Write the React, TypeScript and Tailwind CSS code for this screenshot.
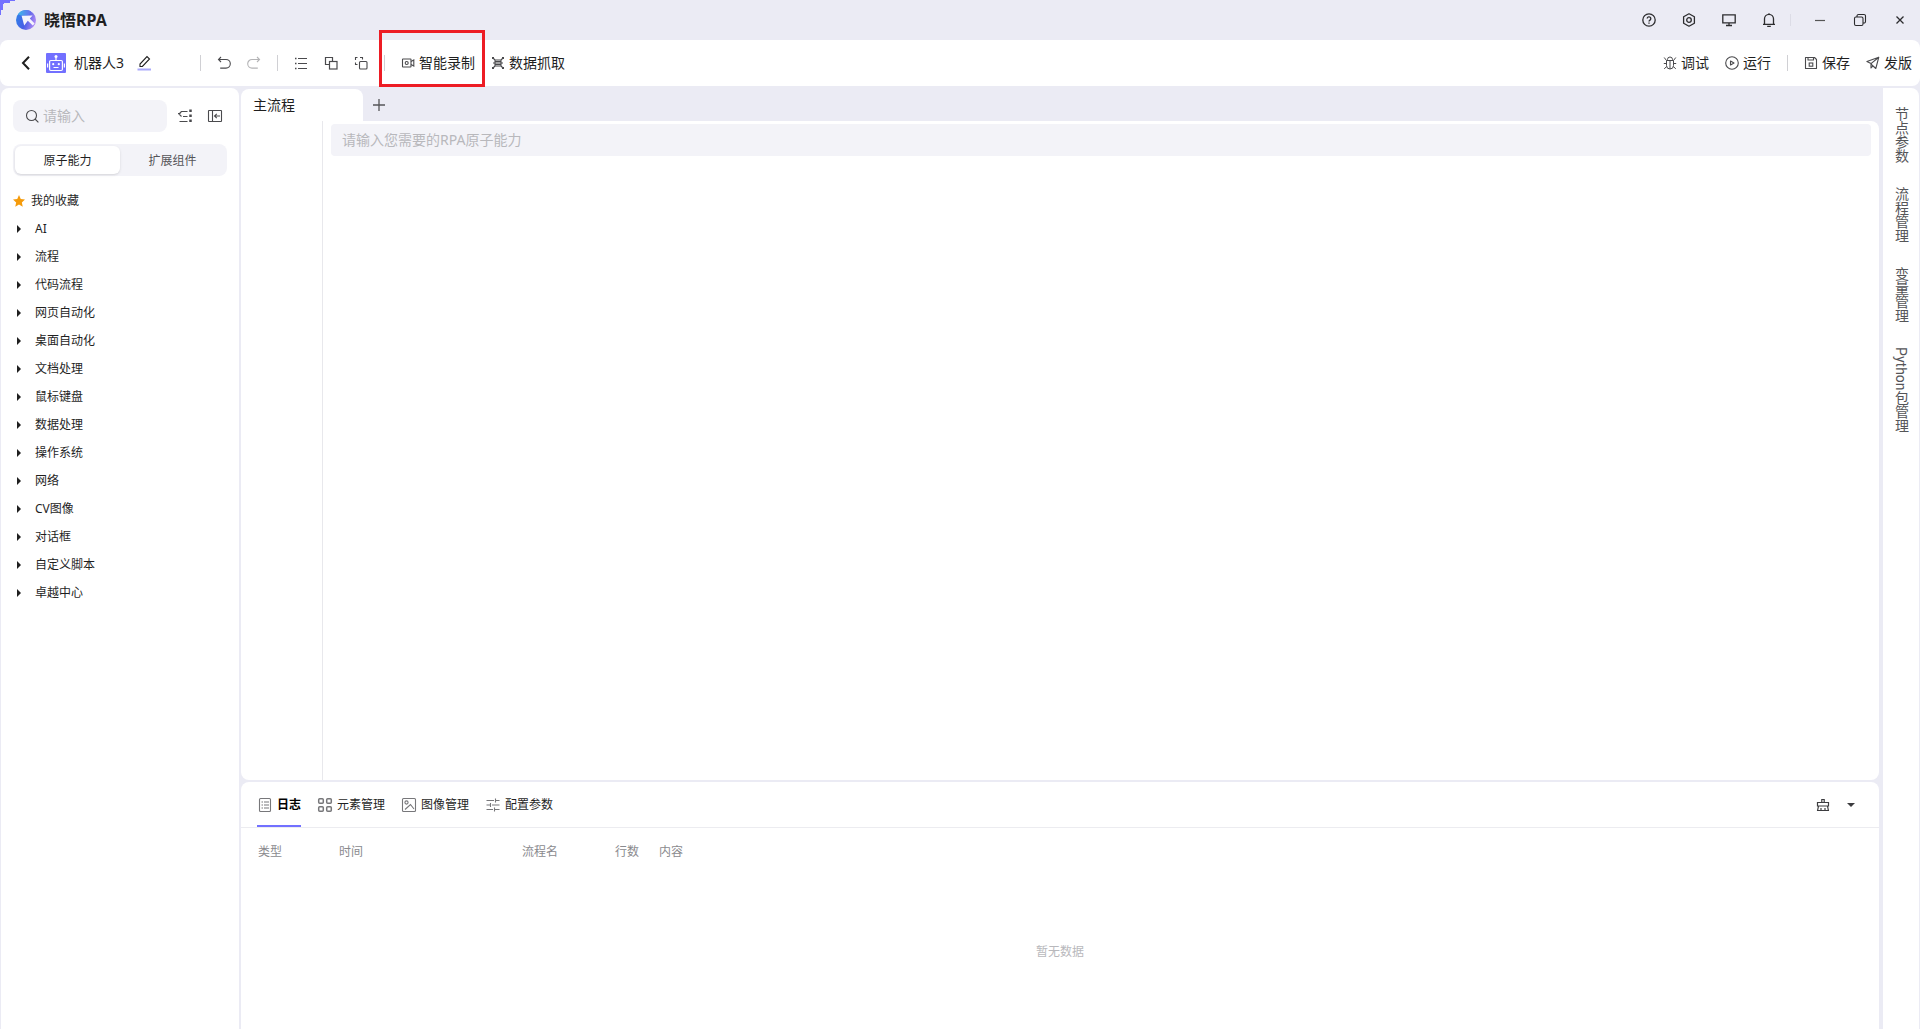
import React, { type ReactNode } from "react";

type IconProps = { size?: number; className?: string; children?: ReactNode; box?: number; sw?: number };

function Icon({ size = 14, box = 14, sw = 1.1, className = "", children }: IconProps) {
  return (
    <svg
      width={size}
      height={size}
      viewBox={`0 0 ${box} ${box}`}
      fill="none"
      stroke="currentColor"
      strokeWidth={sw}
      className={`shrink-0 ${className}`}
      aria-hidden="true"
    >
      {children}
    </svg>
  );
}

const Logo = () => (
  <svg width="20" height="20" viewBox="0 0 20 20" aria-hidden="true">
    <defs>
      <linearGradient id="lg" x1="0" y1="0.3" x2="1" y2="0.6">
        <stop offset="0" stopColor="#2f7fe8" />
        <stop offset="0.5" stopColor="#4a5fe6" />
        <stop offset="1" stopColor="#b58cf5" />
      </linearGradient>
      <linearGradient id="lt" x1="0" y1="0" x2="1" y2="0">
        <stop offset="0" stopColor="#3bb8ea" />
        <stop offset="1" stopColor="#6a6cf0" />
      </linearGradient>
    </defs>
    <circle cx="10" cy="10" r="10" fill="url(#lg)" />
    <path d="M2 4.2A10 10 0 0 1 15 1.4L13 5.5L5 5.5Z" fill="url(#lt)" />
    <path d="M5.6 5.8L16.6 5.6L13.8 8.4L18.6 13.6L16.8 15.6L11.8 10.8L8.2 15.4Z" fill="#f4f3fd" />
  </svg>
);

const Robot = () => (
  <svg width="20" height="20" viewBox="0 0 20 20" className="shrink-0" aria-hidden="true">
    <rect width="20" height="20" rx="1" fill="#7270ff" />
    <g fill="none" stroke="#fff" strokeWidth="1.2">
      <rect x="3.600" y="7.500" width="12.800" height="10" rx="1.200" />
      <path d="M10 7.500V4.500M1.600 10.500v4M18.400 10.500v4M7.500 14.500h5" />
    </g>
    <circle cx="10" cy="3.600" r="1.500" fill="#fff" />
    <circle cx="7.200" cy="11.200" r="1.100" fill="#fff" />
    <circle cx="12.800" cy="11.200" r="1.100" fill="#fff" />
  </svg>
);

function IconButton({ label, className = "", children }: { label: string; className?: string; children: ReactNode }) {
  return (
    <button type="button" aria-label={label} className={`flex items-center justify-center ${className}`}>
      {children}
    </button>
  );
}

const Separator = () => <span className="mx-2 h-4 w-px shrink-0 bg-[#d0d0d4]" />;

function TextButton({ icon, children }: { icon: ReactNode; children: ReactNode }) {
  return (
    <button type="button" className="flex items-center gap-1 whitespace-nowrap text-sm">
      {icon}
      {children}
    </button>
  );
}

function TitleBar() {
  return (
    <header className="flex h-10 shrink-0 items-center pl-4">
      <Logo />
      <h1 className="ml-2 text-base font-bold">晓悟RPA</h1>
      <div className="ml-auto flex items-center text-[#2c2c2e]">
        <IconButton label="帮助" className="h-10 w-10">
          <Icon sw={1.3}>
            <circle cx="7" cy="7" r="6.2" />
            <path d="M5.2 5.6a1.8 1.8 0 1 1 2.8 1.5c-.7.5-1 .7-1 1.4M7 9.6v1.2" />
          </Icon>
        </IconButton>
        <IconButton label="设置" className="h-10 w-10">
          <Icon sw={1.3}>
            <path d="M7 .8L12.400 3.800V10.200L7 13.200L1.600 10.200V3.800Z" strokeLinejoin="round" />
            <circle cx="7" cy="7" r="2.300" />
          </Icon>
        </IconButton>
        <IconButton label="屏幕" className="h-10 w-10">
          <Icon sw={1.3}>
            <path d="M.8 1.800H13.200V9.800H.8ZM7 9.800V12.400M4 12.500H10" />
          </Icon>
        </IconButton>
        <IconButton label="通知" className="h-10 w-10">
          <Icon sw={1.3}>
            <path d="M1 11.300H13M2.500 11V5.800a4.500 4.500 0 0 1 9 0v5.200M5.200 13.300H8.800M7 .2V1.600" />
          </Icon>
        </IconButton>
        <span className="mx-px h-3 w-px bg-[#dcdce6]" />
        <IconButton label="最小化" className="ml-2 h-10 w-10">
          <Icon sw={1.2} className="text-[#555]">
            <path d="M2 7.500H12" />
          </Icon>
        </IconButton>
        <IconButton label="还原" className="h-10 w-10">
          <Icon sw={1.1}>
            <rect x="1.500" y="4" width="8.500" height="8.500" rx="1.400" />
            <path d="M4 4V3a1.500 1.500 0 0 1 1.500-1.500H11A1.500 1.500 0 0 1 12.500 3V8.500A1.500 1.500 0 0 1 11 10H10" />
          </Icon>
        </IconButton>
        <IconButton label="关闭" className="h-10 w-10">
          <Icon sw={1.3}>
            <path d="M3.500 3.500L10.500 10.500M10.500 3.500L3.500 10.500" />
          </Icon>
        </IconButton>
      </div>
    </header>
  );
}

function Toolbar() {
  return (
    <div className="flex h-[46px] shrink-0 items-center rounded-lg bg-white pl-5 pr-2 text-[#4a4a4d]">
      <IconButton label="返回" className="w-3 text-[#1f1f1f]">
        <Icon sw={2}>
          <path d="M10 .8L4 7L10 13.200" />
        </Icon>
      </IconButton>
      <div className="ml-[14px] flex w-[146px] items-center gap-2 text-[#1f1f1f]">
        <Robot />
        <span className="text-sm">机器人3</span>
        <IconButton label="重命名" className="ml-1">
          <Icon size={16} box={16}>
            <path d="M4 11.500V9L11 1.500L13.500 4L6.400 11.500Z" />
            <path d="M1.500 14.500H15" stroke="#a9a8fb" strokeWidth="2" />
          </Icon>
        </IconButton>
      </div>
      <Separator />
      <IconButton label="撤销" className="h-8 w-[30px]">
        <Icon>
          <path d="M1.500 3.500H9a4.300 4.300 0 0 1 0 8.600H3.200M4 1L1.500 3.500L4 6" />
        </Icon>
      </IconButton>
      <IconButton label="重做" className="h-8 w-[30px] text-[#b4b4b6]">
        <Icon>
          <path d="M12.500 3.500H5a4.300 4.300 0 0 0 0 8.600H10.800M10 1L12.500 3.500L10 6" />
        </Icon>
      </IconButton>
      <Separator />
      <IconButton label="列表" className="h-8 w-[30px]">
        <Icon>
          <path d="M4 2.500H13M4 7.500H13M4 12.500H13" />
          <path d="M1 2.500H2.500M1 7.500H2.500M1 12.500H2.500" strokeWidth="1.500" />
        </Icon>
      </IconButton>
      <IconButton label="编组" className="h-8 w-[30px]">
        <Icon sw={1.2}>
          <path d="M5.500 8.500H1.500V1.500H8.500V5.500" />
          <rect x="5.500" y="5.500" width="7.500" height="7.500" />
        </Icon>
      </IconButton>
      <IconButton label="取消编组" className="h-8 w-[30px]">
        <Icon>
          <path d="M3.500 8.500H1.500V6.500M1.500 4V1.500H3.500M6 1.500H8.500V3.500" />
          <rect x="5.500" y="5.500" width="7.500" height="7.500" rx="1" />
        </Icon>
      </IconButton>
      <Separator />
      <div className="relative ml-2 text-[#1f1f1f]">
        <TextButton
          icon={
            <Icon className="text-[#4a4a4d]">
              <rect x="1.500" y="3" width="8.500" height="8" rx=".5" />
              <circle cx="5.700" cy="7" r="1.500" />
              <path d="M10 5.500L12.800 4V10L10 8.500" />
            </Icon>
          }
        >
          智能录制
        </TextButton>
        <span className="pointer-events-none absolute -bottom-[14px] -left-[22px] -right-[10px] -top-[23px] border-[3px] border-[#ed1c24]" />
      </div>
      <div className="ml-4 text-[#1f1f1f]">
        <TextButton
          icon={
            <Icon className="text-[#4a4a4d]">
              <path d="M4 4H10V10H4ZM2 7H12M4 5.500H10M4 8.500H10M2 2L4 4M12 2L10 4M2 12L4 10M12 12L10 10" />
              <path d="M1 2H3M11 2H13M1 12H3M11 12H13" strokeWidth="2" />
            </Icon>
          }
        >
          数据抓取
        </TextButton>
      </div>
      <div className="ml-auto flex items-center gap-4 text-[#1f1f1f]">
        <TextButton
          icon={
            <Icon className="text-[#4a4a4d]" sw={1}>
              <path d="M3.500 4.500H10.500V9.500a3.500 3.500 0 0 1-7 0ZM4.500 4.500V3.500a2.500 2.500 0 0 1 5 0V4.500M7 4.500V13M.8 7.500H3.500M10.500 7.500H13.200M1.200 1.500L3.500 4.500M12.800 1.500L10.500 4.500M1.200 12.800L3.700 10.500M12.800 12.800L10.300 10.500" />
            </Icon>
          }
        >
          调试
        </TextButton>
        <TextButton
          icon={
            <Icon className="text-[#4a4a4d]">
              <circle cx="7" cy="7" r="6.300" />
              <path d="M5.500 5V9L9 7Z" strokeLinejoin="round" />
            </Icon>
          }
        >
          运行
        </TextButton>
        <span className="h-4 w-px bg-[#d0d0d4]" />
        <TextButton
          icon={
            <Icon className="text-[#4a4a4d]">
              <path d="M1.500 1.500H10.500L12.500 3.500V12.500H1.500ZM4 1.500V4H9.500V1.500" strokeLinejoin="round" />
              <rect x="5.200" y="7" width="3.600" height="3.200" />
            </Icon>
          }
        >
          保存
        </TextButton>
        <TextButton
          icon={
            <Icon className="text-[#4a4a4d]">
              <path d="M12.800 1.200L.9 5.500L5 7.600L6.500 9.500L9.800 12.500ZM12.800 1.200L5 7.600V12L7 9.800" strokeLinejoin="round" />
            </Icon>
          }
        >
          发版
        </TextButton>
      </div>
    </div>
  );
}

const categories = [
  "AI",
  "流程",
  "代码流程",
  "网页自动化",
  "桌面自动化",
  "文档处理",
  "鼠标键盘",
  "数据处理",
  "操作系统",
  "网络",
  "CV图像",
  "对话框",
  "自定义脚本",
  "卓越中心",
];

function Sidebar() {
  return (
    <aside className="flex w-[238px] shrink-0 flex-col rounded-t-lg bg-white px-3 pt-3 text-xs">
      <div className="flex items-center">
        <label className="flex h-8 w-[154px] items-center gap-1 rounded-lg bg-[#f3f3f8] pl-3">
          <Icon className="text-[#4a4a4d]">
            <circle cx="6.500" cy="6.500" r="5" />
            <path d="M10 10L13.400 13.400" />
          </Icon>
          <input
            aria-label="搜索"
            placeholder="请输入"
            className="w-full min-w-0 bg-transparent text-sm outline-none placeholder:text-[#b8b8bc]"
          />
        </label>
        <IconButton label="展开" className="ml-[10px] h-8 w-4 text-[#4a4a4d]">
          <Icon size={16} box={16}>
            <path d="M4.500 3.500H10.500M1 5.500H3.500M6 8.500H10.500M2.500 13.500H10.500M4.500 3.500L2 6L4.500 8.500" />
            <path d="M13.500 1.500V14.500" strokeWidth="2.500" strokeDasharray="2.500 2.500" />
          </Icon>
        </IconButton>
        <IconButton label="收起侧栏" className="ml-[14px] h-8 w-4 text-[#4a4a4d]">
          <Icon size={16} box={16}>
            <rect x="1.500" y="2.500" width="13" height="11" rx=".5" />
            <path d="M5.500 2.500V13.500M13 8H8M9.800 5.800L7.500 8L9.800 10.200" />
          </Icon>
        </IconButton>
      </div>
      <div className="mt-3 flex h-8 w-full rounded-lg bg-[#f3f3f8] p-0.5">
        <button type="button" className="flex-1 rounded-md bg-white pt-px text-[#1f1f1f] shadow-sm">
          原子能力
        </button>
        <button type="button" className="flex-1 pt-px text-[#555558]">
          扩展组件
        </button>
      </div>
      <button type="button" className="mt-[11px] flex h-7 items-center gap-1.5">
        <svg width="12" height="12" viewBox="0 0 24 24" fill="#f59b0b" aria-hidden="true">
          <path d="M12 0L15.500 8L24 9L17.700 14.800L19.500 23.500L12 19L4.500 23.500L6.300 14.800L0 9L8.500 8Z" />
        </svg>
        我的收藏
      </button>
      <ul>
        {categories.map((name) => (
          <li key={name}>
            <button type="button" className="flex h-7 w-full items-center gap-3.5 pl-1">
              <svg width="4" height="8" viewBox="0 0 4 8" fill="#1f1f1f" aria-hidden="true">
                <path d="M0 0L4 4L0 8Z" />
              </svg>
              {name}
            </button>
          </li>
        ))}
      </ul>
    </aside>
  );
}

function FlowEditor() {
  return (
    <section className="flex min-h-0 flex-1 flex-col pt-px">
      <div className="flex h-8 shrink-0">
        <button type="button" className="w-[122px] rounded-t-lg bg-white pl-3 text-left text-sm">
          主流程
        </button>
        <IconButton label="新建流程" className="h-8 w-8 text-[#555558]">
          <Icon sw={1.3}>
            <path d="M7 1V13M1 7H13" />
          </Icon>
        </IconButton>
      </div>
      <div className="flex min-h-0 flex-1 rounded-b-lg rounded-tr-lg bg-white">
        <div className="w-[82px] shrink-0 border-r border-[#e8e8ec]" />
        <div className="flex-1 p-2 pt-[3px]">
          <input
            aria-label="原子能力"
            placeholder="请输入您需要的RPA原子能力"
            className="block h-8 w-full rounded bg-[#f3f3f8] px-[11px] pb-0.5 text-sm outline-none placeholder:text-[#b8b8bc]"
          />
        </div>
      </div>
    </section>
  );
}

const panelTabs: { name: string; icon: ReactNode }[] = [
  {
    name: "日志",
    icon: (
      <>
        <rect x="2.500" y="1.500" width="11" height="13" rx="1" />
        <path d="M4.500 5H6M7 5H12M4.500 8H6M7 8H12M4.500 11H6M7 11H12" />
      </>
    ),
  },
  {
    name: "元素管理",
    icon: (
      <g strokeWidth="1.500">
        <rect x="1.700" y="1.700" width="4.600" height="4.600" rx="1" />
        <rect x="9.700" y="1.700" width="4.600" height="4.600" rx="1" />
        <rect x="1.700" y="9.700" width="4.600" height="4.600" rx="1" />
        <rect x="9.700" y="9.700" width="4.600" height="4.600" rx="1" />
      </g>
    ),
  },
  {
    name: "图像管理",
    icon: (
      <>
        <rect x="1.500" y="1.500" width="13" height="13" rx="1" />
        <circle cx="5.500" cy="5.500" r="1.600" />
        <path d="M4 12.500L9.500 7.500L13 12" />
      </>
    ),
  },
  {
    name: "配置参数",
    icon: <path d="M1.500 3.500H9M11 3.500H14.500M1.500 8H5M7 8H14.500M1.500 12.500H8M10 12.500H14.500M10.500 1.500V5.500M5.500 6V10M9.500 10.500V14.500" />,
  },
];

function BottomPanel() {
  return (
    <section className="flex h-[247px] shrink-0 flex-col rounded-t-lg bg-white text-xs">
      <div className="flex h-[46px] shrink-0 items-stretch border-b border-[#ececf0] px-4">
        <div role="tablist" className="flex gap-4">
          {panelTabs.map((t, i) => (
            <button
              key={t.name}
              type="button"
              role="tab"
              aria-selected={i === 0}
              className={
                i === 0
                  ? "flex items-center gap-1 border-b-2 border-[#7270ff] pt-0.5 font-bold text-black"
                  : "flex items-center gap-1 border-b-2 border-transparent pt-0.5"
              }
            >
              <Icon size={16} box={16} className="text-[#77777a]">
                {t.icon}
              </Icon>
              {t.name}
            </button>
          ))}
        </div>
        <div className="ml-auto flex items-center gap-3 pr-1 text-[#3c3c3f]">
          <IconButton label="清空" className="w-4">
            <Icon sw={1.2}>
              <path d="M1.500 8V4.500H12.500V8ZM2.500 8L1.600 12.500H12.400L11.500 8M5 10V12.500M9 10V12.500" />
              <path d="M5.800 4V1.500H8.200V4" />
            </Icon>
          </IconButton>
          <IconButton label="折叠" className="w-4">
            <svg width="8" height="4" viewBox="0 0 8 4" fill="currentColor" aria-hidden="true">
              <path d="M0 0H8L4 4Z" />
            </svg>
          </IconButton>
        </div>
      </div>
      <table className="w-full table-fixed text-left text-[#8a8a8e]">
        <thead>
          <tr className="h-12">
            <th className="w-[98px] pl-[17px] font-normal">类型</th>
            <th className="w-[183px] font-normal">时间</th>
            <th className="w-[93px] font-normal">流程名</th>
            <th className="w-11 font-normal">行数</th>
            <th className="font-normal">内容</th>
          </tr>
        </thead>
      </table>
      <p className="flex flex-1 items-center justify-center pb-0.5 text-[#b8b8bc]">暂无数据</p>
    </section>
  );
}

const rightTabs = ["节点参数", "流程管理", "变量管理", "Python包管理"];

export default function App() {
  return (
    <div className="relative flex h-screen flex-col overflow-hidden bg-[#ebebf4] font-['Noto_Sans','Noto_Sans_CJK_SC',sans-serif] text-[#1f1f1f]">
      <svg width="16" height="16" viewBox="0 0 16 16" className="absolute left-0 top-0" fill="#7270ff" aria-hidden="true">
        <path d="M0 0H15V1H10V3H4V4H3V10H1V15H0Z" />
      </svg>
      <TitleBar />
      <Toolbar />
      <div className="flex min-h-0 flex-1 gap-0.5 px-px pt-0.5">
        <Sidebar />
        <main className="flex min-w-0 flex-1 flex-col gap-0.5">
          <FlowEditor />
          <BottomPanel />
        </main>
        <nav className="ml-0.5 flex w-9 shrink-0 flex-col items-center gap-6 rounded-tr-lg bg-white pt-[19px] font-['Roboto','Noto_Sans_CJK_SC',sans-serif] text-sm text-[#555558]">
          {rightTabs.map((t) => (
            <button key={t} type="button" className="[writing-mode:vertical-rl]">
              {t}
            </button>
          ))}
        </nav>
      </div>
    </div>
  );
}
